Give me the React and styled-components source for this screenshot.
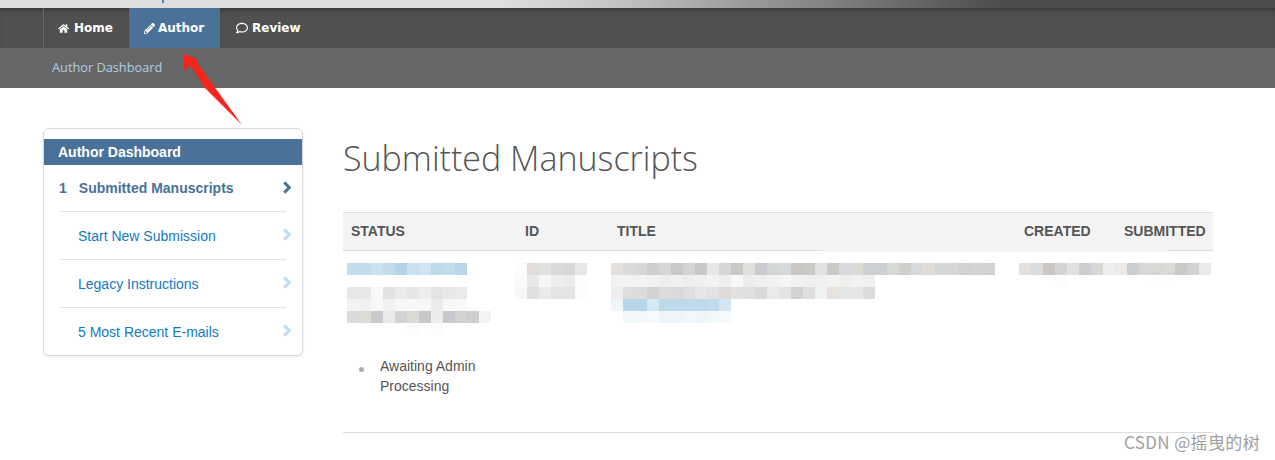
import styled, { createGlobalStyle } from "styled-components";
import { FaHome, FaPencilAlt, FaRegComment } from "react-icons/fa";

const GlobalStyle = createGlobalStyle`
    html, body {
        margin: 0;
        padding: 0;
        background: #fff;
        font-family: "Liberation Sans", Arial, sans-serif;
        overflow: hidden;
    }
`;

const Page = styled.div`
    position: relative;
    width: 1275px;
    height: 460px;
    overflow: hidden;
`;

const TopStrip = styled.div`
    height: 8px;
    background: linear-gradient(90deg, #dedede 0, #dedede 500px, #c8c8c8 600px, #4c4c4c 1000px, #4c4c4c 100%);
`;

const BlueTick = styled.span`
    position: absolute;
    left: 162px;
    top: 0;
    width: 2px;
    height: 3px;
    background: #3a8cc0;
`;

const NavBar = styled.nav`
    display: flex;
    height: 40px;
    padding-left: 43px;
    background: repeating-conic-gradient(#525252 0 25%, #4e4e4e 0 50%) 0 0 / 2px 2px;
    box-shadow: inset 0 5px 5px -3px rgba(0, 0, 0, 0.35);
`;

const NavItem = styled.a`
    display: flex;
    align-items: center;
    gap: ${({ $gap }) => $gap}px;
    box-sizing: border-box;
    width: ${({ $width }) => $width}px;
    padding-left: ${({ $pad }) => $pad}px;
    border-left: 1px solid ${({ $line }) => ($line ? "#686868" : "transparent")};
    background: ${({ $active }) => ($active ? "#4a7299" : "transparent")};
    color: #fff;
    font: bold 12px "DejaVu Sans", Verdana, sans-serif;

    svg {
        font-size: ${({ $icon }) => $icon || 11}px;
    }
`;

const SubBar = styled.div`
    display: flex;
    align-items: center;
    box-sizing: border-box;
    height: 40px;
    padding: 0 0 2px 52px;
    background: repeating-conic-gradient(#686868 0 25%, #646464 0 50%) 0 0 / 2px 2px;
    color: #b4cde3;
    font: 12.75px "Open Sans", sans-serif;
`;

const Content = styled.div`
    display: flex;
    align-items: flex-start;
    gap: 40px;
    padding: 40px 0 0 43px;
`;

const SideCard = styled.aside`
    box-sizing: border-box;
    width: 260px;
    height: 228px;
    padding-top: 10px;
    border: 1px solid #d8d8d8;
    border-radius: 6px;
    box-shadow: 0 1px 2px rgba(0, 0, 0, 0.08);
`;

const SideHead = styled.div`
    display: flex;
    align-items: center;
    height: 26px;
    padding-left: 14px;
    background: #4a7299;
    color: #fff;
    font-size: 14px;
    font-weight: bold;
`;

const SideItem = styled.a`
    display: flex;
    align-items: center;
    justify-content: space-between;
    box-sizing: border-box;
    height: 48px;
    margin: 0 16px;
    padding: 0 0 0 ${({ $current }) => ($current ? 0 : 18)}px;
    border-bottom: 1px solid ${({ $last }) => ($last ? "transparent" : "#e2e2e2")};
    color: ${({ $current }) => ($current ? "#4a7299" : "#0f7cc1")};
    font-size: 14px;
    font-weight: ${({ $current }) => ($current ? "bold" : "normal")};

    &:first-of-type {
        height: 47px;
    }
`;

const ItemLabel = styled.span`
    display: flex;
    gap: 12px;
    margin-left: -1px;
`;

const ChevronIcon = styled.svg`
    flex: none;
    margin-right: -6px;
    color: ${({ $current }) => ($current ? "#4a7299" : "#bcdcef")};
    transform: translateY(-1px);
`;

const Chevron = ({ current }) => (
    <ChevronIcon $current={current} width="10" height="13" viewBox="0 0 10 13">
        <path d="M2.2 1.4 7.3 6.5 2.2 11.6" fill="none" stroke="currentColor" strokeWidth="3" />
    </ChevronIcon>
);

const Main = styled.main`
    width: 870px;
`;

const Title = styled.h1`
    margin: 9px 0 32px;
    height: 43px;
    color: #555;
    font: 300 34px/43px "Open Sans", sans-serif;
`;

const TableHead = styled.div`
    position: relative;
    display: grid;
    grid-template-columns: 174px 92px 407px 100px 1fr;
    align-items: center;
    box-sizing: border-box;
    height: 39px;
    padding: 0 0 2px 8px;
    border-top: 1px solid #dedede;
    border-bottom: 1px solid #dedede;
    background: #f4f4f4;
    color: #555;
    font-size: 14px;
    font-weight: bold;

    &::after {
        content: "";
        position: absolute;
        left: 480px;
        bottom: -2px;
        width: 345px;
        height: 3px;
        background: #f6f6f6;
    }
`;

const TableBody = styled.div`
    display: grid;
    grid-template-columns: 168px 96px 408px 1fr;
    box-sizing: border-box;
    height: 182px;
    padding: 12px 0 0 4px;
    border-bottom: 1px solid #dcdcdc;
`;

const Mosaic = styled.div`
    display: flex;
    flex-direction: column;
    margin-bottom: ${({ $gap }) => $gap || 0}px;
`;

const MosaicRow = styled.div`
    display: flex;
    height: 12px;
`;

const Cell = styled.span`
    width: 12px;
    height: 12px;
    background: ${({ $c }) => $c};
`;

const StatusList = styled.ul`
    display: flex;
    gap: 16px;
    margin: 21px 0 0 12px;
    padding: 0;
    width: 140px;
    list-style: none;
    color: #555;
    font-size: 14px;
    line-height: 20px;
`;

const Dot = styled.span`
    flex: none;
    width: 5px;
    height: 5px;
    margin-top: 11px;
    border-radius: 50%;
    background: #aaa;
`;

const Arrow = styled.svg`
    position: absolute;
    left: 170px;
    top: 45px;
`;

const Watermark = styled.span`
    position: absolute;
    right: 15px;
    top: 432px;
    color: #a0a0a0;
    font: 17px "Noto Sans CJK SC", "Noto Sans", sans-serif;
    letter-spacing: 0.35px;
    line-height: 20px;
`;

const statusLink = [["#c3dcec", "#c3dcec", "#cbe1ee", "#c3dcec", "#b4d5e9", "#c9e1ef", "#d2e4f0", "#bedaeb", "#c3dcec", "#b8d5e9"]];
const statusText = [
    ["#e8e8e8", "#e8e8e6", "#f9f8f6", "#dfe1e2", "#eaebeb", "#e6e6e7", "#eeeeec", "#e4e4e4", "#e8e8e8", "#e9ebea"],
    ["#f3f3f3", "#f0f0ee", "#f8f8f8", "#f1f1f1", "#f8f8f6", "#f8f8f8", "#f7f7f7", "#ebebeb", "#f8f8f8", "#f9f9f9"],
    ["#dadada", "#dadcd6", "#c9c9ce", "#e9e9e7", "#d2d4d3", "#dcdad5", "#c8c8c8", "#ececec", "#c6cace", "#d2d2d2", "#cdced0", "#f3f3f3"],
    ["#fff", "#fff", "#fff", "#fff", "#fff", "#fbfbfb", "#fff", "#fbfbfb"],
];
const idText = [
    ["#fcfcfc", "#e2dddb", "#e0e1e3", "#d9d9db", "#d9d7d5", "#e6e7e9"],
    ["#fafafa", "#e8e8e8", "#f6f6f4", "#eeeeee", "#ebebeb", "#fdfdfd"],
    ["#f7f7f5", "#dfdfdf", "#e9eaea", "#e3e3e3", "#e4e4e4", "#fbfcfe"],
];
const titleText = [
    ["#e3e0de", "#d9dadc", "#dbd7d4", "#cecece", "#d6d6d6", "#c9c9c9", "#d4d4d4", "#c8c8c8", "#e6e8e6", "#d5d5d5", "#c9c9c5", "#dfdfdb", "#c9cbd0", "#d5d7d6", "#d6d9db", "#c9c7c4", "#cbc9c6", "#e0e2e4", "#c9c9c5", "#d6dadd", "#dcdad5", "#cdcfd2", "#cdd0d2", "#d6d8d6", "#cfcec9", "#d6dadd", "#e2dcd8", "#d5d6d6", "#d6d6d6", "#d1d1cf", "#d3d3d3", "#d1d1cf"],
    ["#f2f2f2", "#f2f2f2", "#f3f3f3", "#f2f2f2", "#eeeeee", "#f0f0f0", "#ededed", "#f0f0f0", "#f2f2f2", "#eeeeee", "#f8f8f8", "#ececec", "#f0f0f0", "#f1f1f1", "#f5f5f5", "#f2f2f2", "#f0f0f0", "#eef0ef", "#f2f2f0", "#f0efee", "#f1f2f4", "#f0f0f0"],
    ["#eeeeee", "#dddddb", "#dcdcda", "#d2d2d2", "#dcdcdc", "#d9d9d9", "#dedede", "#e6e6e6", "#e2e2e2", "#dfdcd8", "#e1e1e1", "#e0e0e0", "#d9dbdd", "#e8eaea", "#e4e4e4", "#d2d2d0", "#e0dedc", "#f0f2f2", "#e8e2de", "#e4e6e6", "#e6e6e6", "#dcdcdc"],
    ["#eef6fa", "#b8d6e9", "#b8d6e9", "#d6e8f1", "#bedaea", "#bedaea", "#bedaea", "#bedaea", "#c0dbeb", "#d4e6f1"],
    ["#fff", "#f2f7fa", "#f2f7fa", "#f6fafc", "#eef5fa", "#eef5fa", "#f2f7fa", "#eef5fa", "#f2f7fa", "#f6fafc"],
];
const dateText = [
    ["#e3e0de", "#dadcde", "#cbc7c4", "#d2d4d6", "#e0e1e1", "#ccced2", "#d9d7d3", "#eceef0", "#ece9e6", "#ccced0", "#d9dad8", "#d6d8d6", "#d9d9d5", "#cbc9c6", "#d0d2d4", "#e8eaec"],
    ["#fff", "#fff", "#fff", "#fcfcfc", "#fff", "#fff", "#fff", "#fff", "#fff", "#fff", "#fff", "#fcfdfc", "#fcfdfc"],
];

const Blur = ({ rows, gap }) => (
    <Mosaic $gap={gap}>
        {rows.map((row, i) => (
            <MosaicRow key={i}>
                {row.map((c, j) => <Cell key={j} $c={c} />)}
            </MosaicRow>
        ))}
    </Mosaic>
);

const App = () => {
    return (
        <Page>
            <GlobalStyle />
            <TopStrip />
            <BlueTick />
            <NavBar>
                <NavItem $width={86} $pad={14} $gap={5} $line><FaHome />Home</NavItem>
                <NavItem $width={91} $pad={14} $gap={3} $line $active><FaPencilAlt />Author</NavItem>
                <NavItem $width={100} $pad={15} $gap={4} $icon={12}><FaRegComment />Review</NavItem>
            </NavBar>
            <SubBar>Author Dashboard</SubBar>
            <Content>
                <SideCard>
                    <SideHead>Author Dashboard</SideHead>
                    <SideItem $current>
                        <ItemLabel><span>1</span><span>Submitted Manuscripts</span></ItemLabel>
                        <Chevron current />
                    </SideItem>
                    <SideItem>Start New Submission<Chevron /></SideItem>
                    <SideItem>Legacy Instructions<Chevron /></SideItem>
                    <SideItem $last>5 Most Recent E-mails<Chevron /></SideItem>
                </SideCard>
                <Main>
                    <Title>Submitted Manuscripts</Title>
                    <TableHead>
                        <span>STATUS</span>
                        <span>ID</span>
                        <span>TITLE</span>
                        <span>CREATED</span>
                        <span>SUBMITTED</span>
                    </TableHead>
                    <TableBody>
                        <div>
                            <Blur rows={statusLink} gap={12} />
                            <Blur rows={statusText} />
                            <StatusList>
                                <Dot />
                                <li>Awaiting Admin Processing</li>
                            </StatusList>
                        </div>
                        <Blur rows={idText} />
                        <Blur rows={titleText} />
                        <Blur rows={dateText} />
                    </TableBody>
                </Main>
            </Content>
            <Arrow width="80" height="85" viewBox="0 0 80 85">
                <polygon points="12.5,8.5 28,14.5 26.5,17 72,80 35,43 20,20 14.5,26" fill="#f5251c" />
            </Arrow>
            <Watermark>CSDN @摇曳的树</Watermark>
        </Page>
    );
};

export default App;
